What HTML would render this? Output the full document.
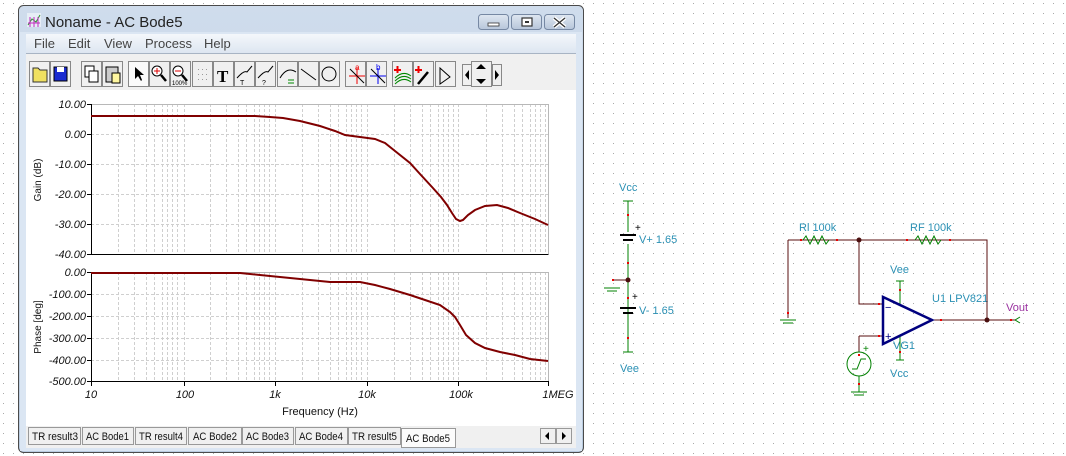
<!DOCTYPE html>
<html><head><meta charset="utf-8"><style>
body{margin:0;width:1066px;height:456px;overflow:hidden;background:#fff;font-family:"Liberation Sans",sans-serif}
svg{position:absolute;left:0;top:0}
</style></head><body>
<svg width="1066" height="456" viewBox="0 0 1066 456" font-family="Liberation Sans, sans-serif">
<defs>
<pattern id="dots" x="3" y="3" width="10" height="10" patternUnits="userSpaceOnUse"><rect width="1" height="1" fill="#a8a8a8"/></pattern>
<linearGradient id="tb" x1="0" y1="0" x2="0" y2="1"><stop offset="0" stop-color="#cfdcec"/><stop offset="1" stop-color="#b9cbe0"/></linearGradient>
<linearGradient id="mb" x1="0" y1="0" x2="0" y2="1"><stop offset="0" stop-color="#f4f7fb"/><stop offset="1" stop-color="#dde6f1"/></linearGradient>
<linearGradient id="btn" x1="0" y1="0" x2="0" y2="1"><stop offset="0" stop-color="#dfe7f1"/><stop offset="1" stop-color="#b7c6da"/></linearGradient>
</defs>
<rect width="1066" height="456" fill="url(#dots)"/>
<rect x="18.5" y="5.5" width="565" height="447" rx="5" fill="url(#tb)" stroke="#4a4a4a"/>
<rect x="20" y="32" width="562" height="419" fill="#dbe6f3"/>
<rect x="26" y="34" width="550" height="19" fill="url(#mb)"/>
<line x1="26" y1="53.5" x2="576" y2="53.5" stroke="#a8b4c4"/>
<rect x="26" y="54" width="550" height="36" fill="#f0f0f0"/>
<rect x="26" y="90" width="550" height="336" fill="#fff"/>
<rect x="26" y="426" width="550" height="22" fill="#f0f0f0"/>
<g transform="translate(27,13)"><rect x="0" y="0" width="14" height="14" fill="#fff" opacity=".5"/><path d="M1 12 L5 6 L9 9 L13 2" stroke="#2a9a2a" fill="none"/><path d="M1 10 L13 10 M3 4 L3 14 M7 4 L7 14 M11 4 L11 14" stroke="#c02cc0"/></g>
<text x="45" y="27" font-size="15" fill="#222">Noname - AC Bode5</text>
<g fill="url(#btn)" stroke="#7688a3"><rect x="478.5" y="14.5" width="30" height="15" rx="3"/><rect x="511.5" y="14.5" width="30" height="15" rx="3"/><rect x="544.5" y="14.5" width="30" height="15" rx="3"/></g>
<rect x="488" y="23" width="11" height="3" fill="#fff" stroke="#333" stroke-width=".8"/>
<rect x="522" y="18" width="10" height="8" fill="#fff" stroke="#333" stroke-width="1.2"/><rect x="525" y="21" width="4" height="2" fill="#333"/>
<path d="M554 18 L565 27 M565 18 L554 27" stroke="#fff" stroke-width="4"/><path d="M554 18 L565 27 M565 18 L554 27" stroke="#333" stroke-width="1.3"/>
<g font-size="13" fill="#444"><text x="34" y="48">File</text><text x="68" y="48">Edit</text><text x="104" y="48">View</text><text x="145" y="48">Process</text><text x="204" y="48">Help</text></g>
<g fill="#f0f0f0" stroke="#888">
<rect x="29.5" y="61.5" width="20" height="25"/><rect x="50.5" y="61.5" width="20" height="25"/>
<rect x="81.5" y="61.5" width="20" height="25"/><rect x="102.5" y="61.5" width="20" height="25"/>
<rect x="128.5" y="61.5" width="20" height="25" fill="#fafafa"/><rect x="149.5" y="61.5" width="20" height="25"/><rect x="170.5" y="61.5" width="20" height="25"/><rect x="192.5" y="61.5" width="20" height="25"/><rect x="213.5" y="61.5" width="20" height="25"/><rect x="234.5" y="61.5" width="20" height="25"/><rect x="255.5" y="61.5" width="20" height="25"/><rect x="277.5" y="61.5" width="20" height="25"/><rect x="298.5" y="61.5" width="20" height="25"/><rect x="319.5" y="61.5" width="20" height="25"/>
<rect x="345.5" y="61.5" width="20" height="25"/><rect x="366.5" y="61.5" width="20" height="25"/>
<rect x="392.5" y="61.5" width="20" height="25"/><rect x="413.5" y="61.5" width="20" height="25"/><rect x="435.5" y="61.5" width="20" height="25"/>
<rect x="462.5" y="64.5" width="9" height="21"/><rect x="471.5" y="61.5" width="20" height="25"/><rect x="492.5" y="64.5" width="9" height="21"/>
</g>
<path d="M33 68h5l2 2h7v12h-14z" fill="#f0e060" stroke="#333"/>
<rect x="54" y="67" width="13" height="14" fill="#1a2ad0" stroke="#000"/><rect x="57" y="67" width="7" height="5" fill="#fff"/>
<rect x="85" y="66" width="9" height="11" fill="#fff" stroke="#000"/><rect x="89" y="71" width="9" height="11" fill="#fff" stroke="#000"/>
<rect x="106" y="67" width="12" height="15" fill="#ccc" stroke="#000"/><rect x="112" y="73" width="8" height="10" fill="#fff7a0" stroke="#000"/>
<path d="M135 67 L135 79 L138 76 L141 81 L142 80 L140 75 L144 75 Z" fill="#000"/>
<circle cx="157" cy="71" r="5" fill="#fff" stroke="#000"/><path d="M157 68v6M154 71h6" stroke="#d00"/><path d="M161 75 L166 81" stroke="#000" stroke-width="2.5"/>
<circle cx="178" cy="71" r="5" fill="#fff" stroke="#000"/><path d="M175 71h6" stroke="#d00"/><path d="M182 75 L187 81" stroke="#000" stroke-width="2.5"/><text x="172" y="85" font-size="6">100%</text>
<g fill="#999"><rect x="198" y="69" width="1" height="1"/><rect x="202" y="69" width="1" height="1"/><rect x="206" y="69" width="1" height="1"/><rect x="198" y="74" width="1" height="1"/><rect x="202" y="74" width="1" height="1"/><rect x="206" y="74" width="1" height="1"/><rect x="198" y="79" width="1" height="1"/><rect x="202" y="79" width="1" height="1"/><rect x="206" y="79" width="1" height="1"/></g>
<text x="217" y="82" font-size="17" font-weight="bold" font-family="Liberation Serif,serif">T</text>
<g stroke="#000" fill="none"><path d="M237 78 Q244 70 247 72 L252 66"/><path d="M258 78 Q265 70 268 72 L273 66"/><path d="M280 78 Q287 66 296 72"/><path d="M301 69 L316 80"/><circle cx="329" cy="74" r="7"/></g>
<g font-size="7"><text x="240" y="85">T</text><text x="262" y="85">?</text></g>
<path d="M288 80h6M288 83h6" stroke="#080"/>
<path d="M349 76h16M357 68v16" stroke="#e00"/><path d="M350 69l14 14" stroke="#000"/><text x="355" y="70" font-size="8" fill="#e00">a</text>
<path d="M370 76h16M378 68v16" stroke="#00e"/><path d="M371 69l14 14" stroke="#000"/><text x="376" y="70" font-size="8" fill="#00e">b</text>
<path d="M394 70h7M397.5 66v7" stroke="#e00" stroke-width="2"/><path d="M395 78q8-8 16-2M395 81q8-8 16-2M395 84q8-8 16-2" stroke="#080" fill="none"/>
<path d="M415 70h7M418.5 66v7" stroke="#e00" stroke-width="2"/><path d="M418 84l10-12" stroke="#000" stroke-width="2.5"/>
<path d="M440 84V68l10 9z" fill="none" stroke="#000"/>
<path d="M469 70v10l-4-5z" fill="#000"/><path d="M481 64l5 5h-10zM481 84l5-5h-10z" fill="#000"/><path d="M495 70v10l4-5z" fill="#000"/>
<g stroke="#cfcfcf" stroke-dasharray="3,2">
<path d="M118.5 104V254M134.5 104V254M146.5 104V254M154.5 104V254M162.5 104V254M167.5 104V254M172.5 104V254M177.5 104V254M184.5 104V254
M210.5 104V254M226.5 104V254M238.5 104V254M246.5 104V254M254.5 104V254M259.5 104V254M264.5 104V254M269.5 104V254M275.5 104V254
M302.5 104V254M318.5 104V254M330.5 104V254M338.5 104V254M346.5 104V254M351.5 104V254M356.5 104V254M361.5 104V254M367.5 104V254
M394.5 104V254M410.5 104V254M422.5 104V254M430.5 104V254M438.5 104V254M443.5 104V254M448.5 104V254M453.5 104V254M458.5 104V254
M486.5 104V254M502.5 104V254M514.5 104V254M522.5 104V254M530.5 104V254M535.5 104V254M540.5 104V254M545.5 104V254"/>
<path d="M118.5 272V381M134.5 272V381M146.5 272V381M154.5 272V381M162.5 272V381M167.5 272V381M172.5 272V381M177.5 272V381M184.5 272V381
M210.5 272V381M226.5 272V381M238.5 272V381M246.5 272V381M254.5 272V381M259.5 272V381M264.5 272V381M269.5 272V381M275.5 272V381
M302.5 272V381M318.5 272V381M330.5 272V381M338.5 272V381M346.5 272V381M351.5 272V381M356.5 272V381M361.5 272V381M367.5 272V381
M394.5 272V381M410.5 272V381M422.5 272V381M430.5 272V381M438.5 272V381M443.5 272V381M448.5 272V381M453.5 272V381M458.5 272V381
M486.5 272V381M502.5 272V381M514.5 272V381M522.5 272V381M530.5 272V381M535.5 272V381M540.5 272V381M545.5 272V381"/>
<path d="M91 134.5H548M91 164.5H548M91 194.5H548M91 224.5H548M91 294.5H548M91 316.5H548M91 338.5H548M91 360.5H548"/>
</g>
<g stroke="#b8b8b8" fill="none"><path d="M91 104.5H548.5V254M91 272.5H548.5V381"/></g>
<g stroke="#000" fill="none"><path d="M91.5 104V254.5H548.5"/><path d="M91.5 272V381.5H548.5"/>
<path d="M87 104.5h4M87 134.5h4M87 164.5h4M87 194.5h4M87 224.5h4M87 254.5h4M87 272.5h4M87 294.5h4M87 316.5h4M87 338.5h4M87 360.5h4M87 381.5h4"/>
<path d="M91.5 381v5M184.5 381v5M275.5 381v5M367.5 381v5M458.5 381v5M548.5 381v5"/></g>
<g font-size="11" font-style="italic" fill="#111" text-anchor="end">
<text x="86" y="108">10.00</text><text x="86" y="138">0.00</text><text x="86" y="168">-10.00</text><text x="86" y="198">-20.00</text><text x="86" y="228">-30.00</text><text x="86" y="258">-40.00</text>
<text x="86" y="276">0.00</text><text x="86" y="298">-100.00</text><text x="86" y="320">-200.00</text><text x="86" y="342">-300.00</text><text x="86" y="364">-400.00</text><text x="86" y="385">-500.00</text>
</g>
<g font-size="11" font-style="italic" fill="#111" text-anchor="middle">
<text x="91" y="398">10</text><text x="185" y="398">100</text><text x="275" y="398">1k</text><text x="367" y="398">10k</text><text x="461" y="398">100k</text><text x="558" y="398">1MEG</text>
</g>
<text x="320" y="415" font-size="11" text-anchor="middle" fill="#111">Frequency (Hz)</text>
<text transform="translate(41,180) rotate(-90)" font-size="10" text-anchor="middle" fill="#111">Gain (dB)</text>
<text transform="translate(41,327) rotate(-90)" font-size="10" text-anchor="middle" fill="#111">Phase [deg]</text>
<g stroke="#800000" stroke-width="2" fill="none">
<path d="M91 116 L255 116 L270 117 L283 118 L300 121 L320 126 L335 131 L345 135 L360 137 L375 139 L385 143 L395 151 L410 163 L420 174 L432 187 L441 197 L447 205 L452 213 L456 219 L460 221 L463 220 L468 215 L475 210 L485 206 L497 205 L508 208 L520 213 L535 219 L548 225"/>
<path d="M91 273 L240 273 L260 275 L300 279 L330 282 L360 282 L375 285 L390 289 L410 295 L425 300 L440 305 L450 312 L455 317 L460 325 L466 335 L475 343 L485 348 L500 352 L515 355 L530 359 L548 361"/>
</g>
<g fill="#f0f0f0" stroke="#999">
<rect x="28.5" y="427.5" width="52" height="17"/><rect x="82.5" y="427.5" width="51" height="17"/><rect x="135.5" y="427.5" width="51" height="17"/><rect x="188.5" y="427.5" width="53" height="17"/><rect x="242.5" y="427.5" width="51" height="17"/><rect x="295.5" y="427.5" width="52" height="17"/><rect x="348.5" y="427.5" width="52" height="17"/>
<rect x="401.5" y="428.5" width="54" height="19" fill="#fcfcfc"/>
<rect x="540.5" y="428.5" width="15" height="15"/><rect x="556.5" y="428.5" width="15" height="15"/>
</g>
<path d="M549 432v8l-4-4z M562 432v8l4-4z" fill="#000"/>
<g font-size="11" fill="#111" lengthAdjust="spacingAndGlyphs">
<text x="32" y="440" textLength="46" lengthAdjust="spacingAndGlyphs">TR result3</text><text x="86" y="440" textLength="43" lengthAdjust="spacingAndGlyphs">AC Bode1</text><text x="139" y="440" textLength="44" lengthAdjust="spacingAndGlyphs">TR result4</text><text x="193" y="440" textLength="44" lengthAdjust="spacingAndGlyphs">AC Bode2</text><text x="246" y="440" textLength="43" lengthAdjust="spacingAndGlyphs">AC Bode3</text><text x="299" y="440" textLength="44" lengthAdjust="spacingAndGlyphs">AC Bode4</text><text x="352" y="440" textLength="45" lengthAdjust="spacingAndGlyphs">TR result5</text><text x="406" y="442" textLength="44" lengthAdjust="spacingAndGlyphs">AC Bode5</text>
</g>
<g font-size="11" fill="#2a90b4">
<text x="619" y="191">Vcc</text><text x="639" y="243">V+ 1.65</text><text x="639" y="314">V- 1.65</text><text x="620" y="372">Vee</text>
<text x="799" y="231">Rl 100k</text><text x="910" y="231">RF 100k</text><text x="890" y="273">Vee</text><text x="932" y="302">U1 LPV821</text><text x="893" y="349">VG1</text><text x="890" y="377">Vcc</text>
</g>
<text x="1006" y="311" font-size="11" fill="#9a30a0">Vout</text>
<g stroke="#5a0f0f" fill="none">
<path d="M628 280H612M788 240H987V320M788 240V318M859 240V304H883M859 336H883M932 320H1015M859 336V352"/>
</g>
<g stroke="#008000" fill="none">
<path d="M623 201h10M628 201V232M628 244V352M623 352h10"/>
<path d="M604 288h16M607 291h10" />
<path d="M780 320h16M783 323h10"/>
<path d="M803 240l3-4 4 8 4-8 4 8 4-8 4 8 3-4M915 240l3-4 4 8 4-8 4 8 4-8 4 8 3-4"/>
<path d="M896 281h8M900 281V305M900 336V360M896 360h8"/>
<circle cx="859" cy="364" r="12"/><path d="M852 369h5l4-10h5"/><path d="M859 376V392M851 392h16M854 395h10"/>
<path d="M1015 320l5-3M1015 320l5 3"/>
</g>
<g stroke="#000"><path d="M620 235h16M623 240h10" stroke-width="2"/><path d="M620 308h16M623 313h10" stroke-width="2"/></g>
<g fill="#000" font-size="10"><text x="635" y="231">+</text><text x="632" y="300">+</text></g>
<path d="M883 297V344L932 320Z" fill="none" stroke="#00007f" stroke-width="2.5"/>
<g font-size="11" fill="#00007f"><text x="885" y="311">−</text><text x="885" y="340">+</text></g>
<text x="863" y="352" font-size="10" fill="#008000">+</text>
<g fill="#4a0f0f"><circle cx="628" cy="280" r="2.5"/><circle cx="859" cy="240" r="2.5"/><circle cx="987" cy="320" r="2.5"/></g>
<g stroke="#e00" stroke-width="2"><path d="M628 214v2M628 262v2M628 297v2M628 337v2M800 240h2M836 240h2M906 240h2M949 240h2M878 304h2M878 336h2M940 320h2M1010 320h2M900 289v2M900 351v2M859 354v2M859 383v2M788 312v2M612 280h2"/></g>
</svg>
</body></html>
